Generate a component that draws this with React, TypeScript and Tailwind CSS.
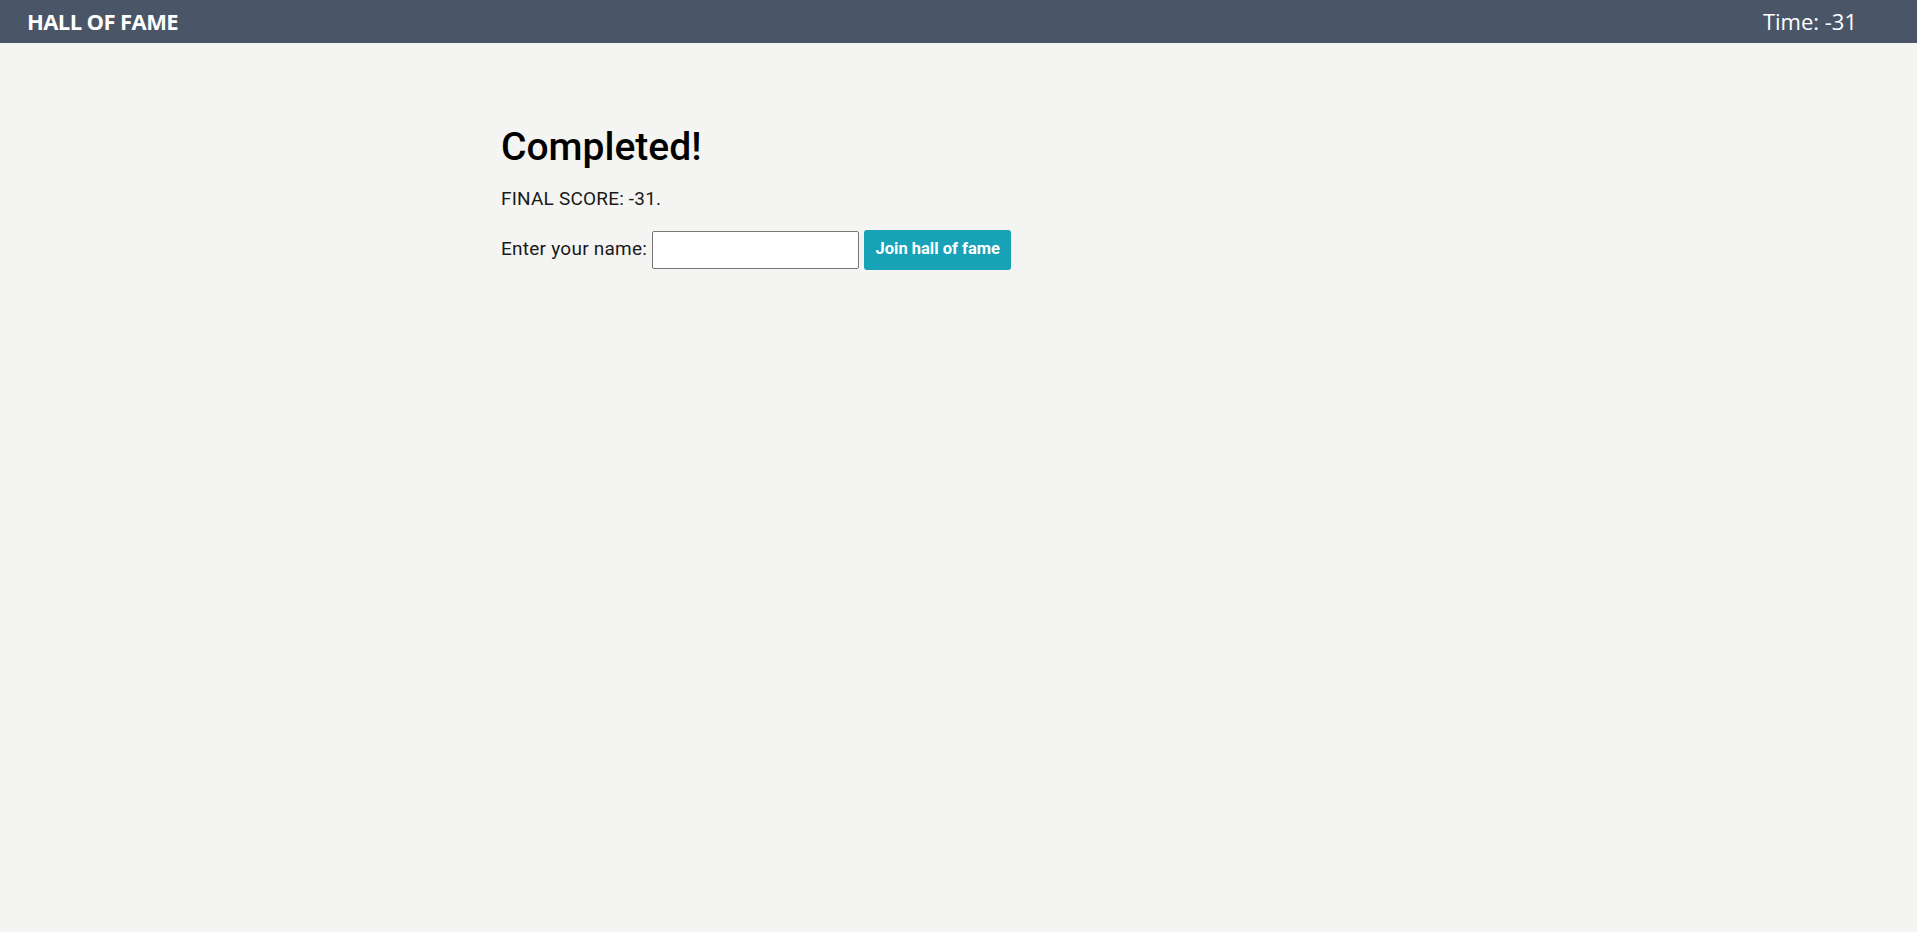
export default function App() {
  return (
    <div className="min-h-screen bg-[#f4f4f2] font-['Roboto',sans-serif] text-black">
      <header className="h-[43px] bg-[#4a5568] text-white flex items-center justify-between pl-[27px] pr-[60px] font-['Open_Sans',sans-serif] text-[22px]">
        <span className="font-bold tracking-[-0.6px]">HALL OF FAME</span>
        <span>Time: -31</span>
      </header>

      <main className="pl-[501px] pt-[74px]">
        <h1 className="text-[39px] font-medium leading-[60px]">Completed!</h1>
        <p className="mt-[8px] text-[19px] tracking-[0.2px] text-[#1a1a1a]">FINAL SCORE: -31.</p>
        <div className="mt-[16px] flex items-center gap-[5px]">
          <label htmlFor="name" className="text-[19px] tracking-[0.25px] text-[#1a1a1a]">
            Enter your name:
          </label>
          <input
            id="name"
            type="text"
            className="w-[207px] h-[38px] bg-white border border-[#767676] rounded-[2px]"
          />
          <button className="h-[40px] w-[147px] rounded-[3px] bg-[#17a2b8] text-white font-bold text-[16.5px]">
            Join hall of fame
          </button>
        </div>
      </main>
    </div>
  );
}
